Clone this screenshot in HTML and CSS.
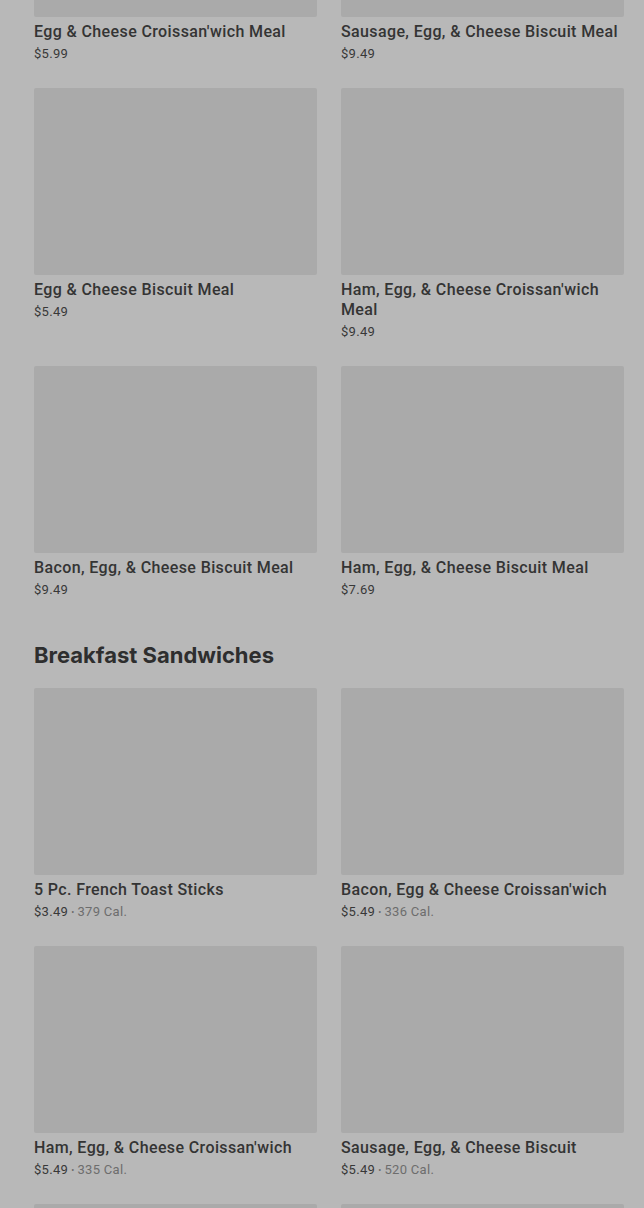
FILE: index.html
```html
<!DOCTYPE html>
<html>
<head>
<meta charset="utf-8">
<link rel="stylesheet" href="styles.css">
</head>
<body>
<main class="page">
  <section class="section first">
    <div class="grid">
      <div class="card"><div class="img"></div><div class="title">Egg &amp; Cheese Croissan'wich Meal</div><div class="meta"><span class="price">$5.99</span></div></div>
      <div class="card"><div class="img"></div><div class="title">Sausage, Egg, &amp; Cheese Biscuit Meal</div><div class="meta"><span class="price">$9.49</span></div></div>
      <div class="card"><div class="img"></div><div class="title">Egg &amp; Cheese Biscuit Meal</div><div class="meta"><span class="price">$5.49</span></div></div>
      <div class="card"><div class="img"></div><div class="title">Ham, Egg, &amp; Cheese Croissan'wich Meal</div><div class="meta"><span class="price">$9.49</span></div></div>
      <div class="card"><div class="img"></div><div class="title">Bacon, Egg, &amp; Cheese Biscuit Meal</div><div class="meta"><span class="price">$9.49</span></div></div>
      <div class="card"><div class="img"></div><div class="title">Ham, Egg, &amp; Cheese Biscuit Meal</div><div class="meta"><span class="price">$7.69</span></div></div>
    </div>
  </section>
  <section class="section">
    <h2 class="heading">Breakfast Sandwiches</h2>
    <div class="grid">
      <div class="card"><div class="img"></div><div class="title">5 Pc. French Toast Sticks</div><div class="meta"><span class="price">$3.49</span><span class="dot">•</span><span class="cal">379 Cal.</span></div></div>
      <div class="card"><div class="img"></div><div class="title">Bacon, Egg &amp; Cheese Croissan'wich</div><div class="meta"><span class="price">$5.49</span><span class="dot">•</span><span class="cal">336 Cal.</span></div></div>
      <div class="card"><div class="img"></div><div class="title">Ham, Egg, &amp; Cheese Croissan'wich</div><div class="meta"><span class="price">$5.49</span><span class="dot">•</span><span class="cal">335 Cal.</span></div></div>
      <div class="card"><div class="img"></div><div class="title">Sausage, Egg, &amp; Cheese Biscuit</div><div class="meta"><span class="price">$5.49</span><span class="dot">•</span><span class="cal">520 Cal.</span></div></div>
      <div class="card"><div class="img"></div><div class="title">&nbsp;</div><div class="meta">&nbsp;</div></div>
      <div class="card"><div class="img"></div><div class="title">&nbsp;</div><div class="meta">&nbsp;</div></div>
    </div>
  </section>
</main>
</body>
</html>
```

FILE: styles.css
```css
html, body {
  margin: 0;
  padding: 0;
  background: #b8b8b8;
  overflow: hidden;
}
body {
  font-family: Roboto, "Liberation Sans", sans-serif;
  color: #303030;
}
.page {
  padding: 0 20px 0 34px;
  margin-top: -170px;
}
.grid {
  display: grid;
  grid-template-columns: 283px 283px;
  column-gap: 24px;
  row-gap: 24px;
}
.card {
  display: flex;
  flex-direction: column;
}
.img {
  height: 187px;
  background: #aaaaaa;
  border-radius: 2px;
}
.title {
  margin-top: 5px;
  font-size: 16px;
  font-weight: 500;
  line-height: 20px;
  letter-spacing: 0.38px;
  color: #343434;
}
.meta {
  margin-top: 2px;
  font-size: 13px;
  line-height: 20px;
  letter-spacing: 0.3px;
  color: #383838;
}
.dot {
  color: #6a6a6a;
  font-size: 9px;
  margin: 0 3px;
  vertical-align: 1px;
}
.cal {
  color: #6d6d6d;
}
.heading {
  margin: 39px 0 17px;
  font-family: Inter, "Noto Sans", sans-serif;
  font-size: 22px;
  font-weight: 700;
  line-height: 32px;
  letter-spacing: 0;
  color: #2e2e2e;
}
```
